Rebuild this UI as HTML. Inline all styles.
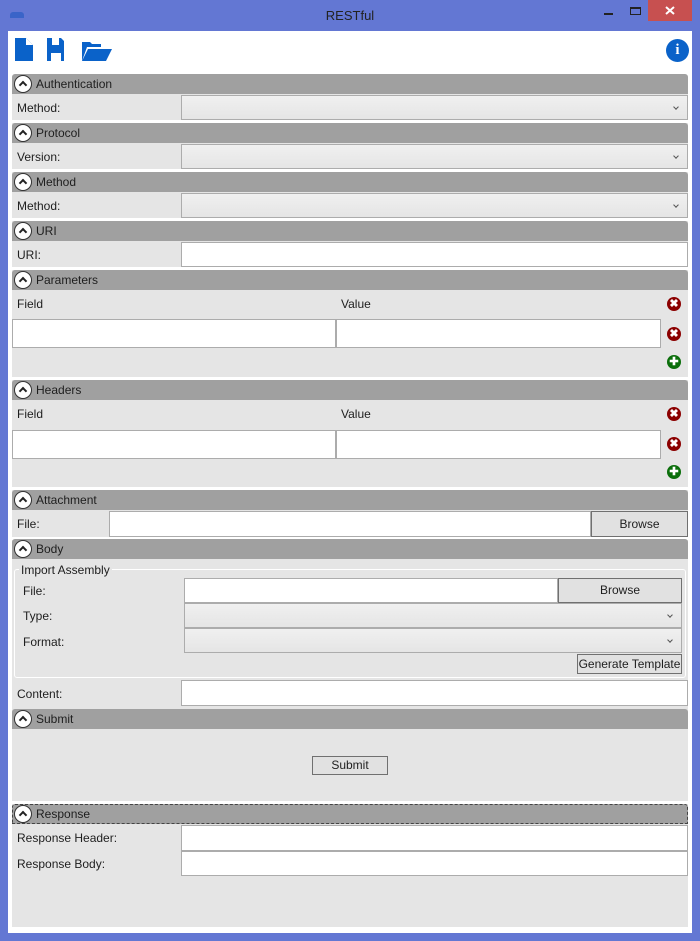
<!DOCTYPE html>
<html><head><meta charset="utf-8"><style>
*{box-sizing:border-box;margin:0;padding:0}
body{width:700px;height:941px;background:#6377d3;font-family:"Liberation Sans",sans-serif;font-size:12px;color:#1e1e1e;position:relative;overflow:hidden}
.a{position:absolute}
.client{left:8px;top:31px;width:684px;height:902px;background:#fff}
.panel{left:12px;top:94px;width:676px;height:833px;background:#e5e5e5}
.hd{position:absolute;left:12px;width:676px;height:20px;background:#a0a0a0;border-radius:3px 3px 0 0;font-size:12px;line-height:20px;padding-left:24px;color:#1e1e1e}
.hd:before{content:"";position:absolute;left:2px;top:1px;width:16px;height:16px;border-radius:50%;background:#fff;border:1px solid #333}
.hd:after{content:"";position:absolute;left:8px;top:8px;width:4px;height:4px;border-left:2px solid #222;border-top:2px solid #222;transform:rotate(45deg)}
.lbl{position:absolute;font-size:12px}
.tb{position:absolute;background:#fff;border:1px solid #acacac}
.cb{position:absolute;background:linear-gradient(#f0f0f0,#e5e5e5);border:1px solid #acacac}
.cb:after{content:"";position:absolute;right:9px;top:9px;width:3px;height:3px;border-right:1px solid #555;border-bottom:1px solid #555;transform:rotate(45deg)}
.btn{position:absolute;background:#e1e1e1;border:1px solid #707070;text-align:center;font-size:12px}
.sep{position:absolute;left:12px;width:676px;height:3px;background:#fff}
.x{position:absolute;width:14px;height:14px;border-radius:50%;background:#8b0000;color:#fff;font-size:11px;font-weight:bold;line-height:14px;text-align:center}
.p{background:#0a6e0a}
</style></head><body>
<div class="a" style="left:10px;top:12px;width:14px;height:6px;background:#3a64c8;border-radius:3px 3px 0 0"></div>
<div class="a" style="left:0;top:8px;width:700px;text-align:center;font-size:13px;color:#222">RESTful</div>
<div class="a" style="left:604px;top:13px;width:9px;height:2px;background:#222"></div>
<div class="a" style="left:630px;top:7px;width:11px;height:8px;border:1px solid #222;border-top-width:2px"></div>
<div class="a" style="left:648px;top:0;width:44px;height:21px;background:#c75050"></div>
<svg class="a" style="left:665px;top:6px" width="10" height="9"><path d="M1 1l8 7M9 1l-8 7" stroke="#fff" stroke-width="2"/></svg>
<div class="a client"></div>
<svg class="a" style="left:14px;top:37px" width="100" height="25" viewBox="0 0 100 25">
<path d="M1 1h11l7 7v16H1z" fill="#0a62c9"/><path d="M12 1v7h7" fill="#fff"/>
<path d="M33 1h5v7h7V1h2l3 3v20h-3v-8H37v8h-4z" fill="#0a62c9"/>
<path d="M68 5h8l2 2h9v3H73l-5 14z" fill="#0a62c9"/><path d="M74 12h24l-6 12H68z" fill="#0a62c9"/>
</svg>
<div class="a" style="left:666px;top:39px;width:23px;height:23px;border-radius:50%;background:#0a62c9;color:#fff;font-weight:bold;font-size:15px;text-align:center;line-height:23px;font-family:'Liberation Serif',serif">i</div>
<div class="a panel"></div>
<div class="hd" style="top:74px">Authentication</div>
<div class="lbl" style="left:17px;top:101px">Method:</div><div class="cb" style="left:181px;top:95px;width:507px;height:25px"></div>
<div class="sep" style="top:120px"></div>
<div class="hd" style="top:123px">Protocol</div>
<div class="lbl" style="left:17px;top:150px">Version:</div><div class="cb" style="left:181px;top:144px;width:507px;height:25px"></div>
<div class="sep" style="top:169px"></div>
<div class="hd" style="top:172px">Method</div>
<div class="lbl" style="left:17px;top:199px">Method:</div><div class="cb" style="left:181px;top:193px;width:507px;height:25px"></div>
<div class="sep" style="top:218px"></div>
<div class="hd" style="top:221px">URI</div>
<div class="lbl" style="left:17px;top:248px">URI:</div><div class="tb" style="left:181px;top:242px;width:507px;height:25px"></div>
<div class="sep" style="top:267px"></div>
<div class="hd" style="top:270px">Parameters</div>
<div class="lbl" style="left:17px;top:297px">Field</div><div class="lbl" style="left:341px;top:297px">Value</div>
<div class="tb" style="left:12px;top:319px;width:324px;height:29px"></div><div class="tb" style="left:336px;top:319px;width:325px;height:29px"></div>
<div class="x" style="left:667px;top:297px">✖</div><div class="x" style="left:667px;top:327px">✖</div><div class="x p" style="left:667px;top:355px">✚</div>
<div class="sep" style="top:377px"></div>
<div class="hd" style="top:380px">Headers</div>
<div class="lbl" style="left:17px;top:407px">Field</div><div class="lbl" style="left:341px;top:407px">Value</div>
<div class="tb" style="left:12px;top:430px;width:324px;height:29px"></div><div class="tb" style="left:336px;top:430px;width:325px;height:29px"></div>
<div class="x" style="left:667px;top:407px">✖</div><div class="x" style="left:667px;top:437px">✖</div><div class="x p" style="left:667px;top:465px">✚</div>
<div class="sep" style="top:487px"></div>
<div class="hd" style="top:490px">Attachment</div>
<div class="lbl" style="left:17px;top:517px">File:</div><div class="tb" style="left:109px;top:511px;width:482px;height:26px"></div>
<div class="btn" style="left:591px;top:511px;width:97px;height:26px;line-height:24px">Browse</div>
<div class="sep" style="top:537px"></div>
<div class="hd" style="top:539px">Body</div>
<div class="a" style="left:14px;top:569px;width:672px;height:109px;border:1px solid #fff;border-radius:3px"></div>
<div class="lbl" style="left:19px;top:563px;background:#e5e5e5;padding:0 2px">Import Assembly</div>
<div class="lbl" style="left:23px;top:584px">File:</div><div class="tb" style="left:184px;top:578px;width:374px;height:25px"></div>
<div class="btn" style="left:558px;top:578px;width:124px;height:25px;line-height:23px">Browse</div>
<div class="lbl" style="left:23px;top:609px">Type:</div><div class="cb" style="left:184px;top:603px;width:498px;height:25px"></div>
<div class="lbl" style="left:23px;top:635px">Format:</div><div class="cb" style="left:184px;top:628px;width:498px;height:25px"></div>
<div class="btn" style="left:577px;top:654px;width:105px;height:20px;line-height:18px">Generate Template</div>
<div class="lbl" style="left:17px;top:687px">Content:</div><div class="tb" style="left:181px;top:680px;width:507px;height:26px"></div>
<div class="hd" style="top:709px">Submit</div>
<div class="btn" style="left:312px;top:756px;width:76px;height:19px;line-height:17px">Submit</div>
<div class="sep" style="top:801px"></div>
<div class="hd" style="top:804px;outline:1px dashed #444;outline-offset:-1px">Response</div>
<div class="lbl" style="left:17px;top:831px">Response Header:</div><div class="tb" style="left:181px;top:825px;width:507px;height:26px"></div>
<div class="lbl" style="left:17px;top:857px">Response Body:</div><div class="tb" style="left:181px;top:851px;width:507px;height:25px"></div>
</body></html>
